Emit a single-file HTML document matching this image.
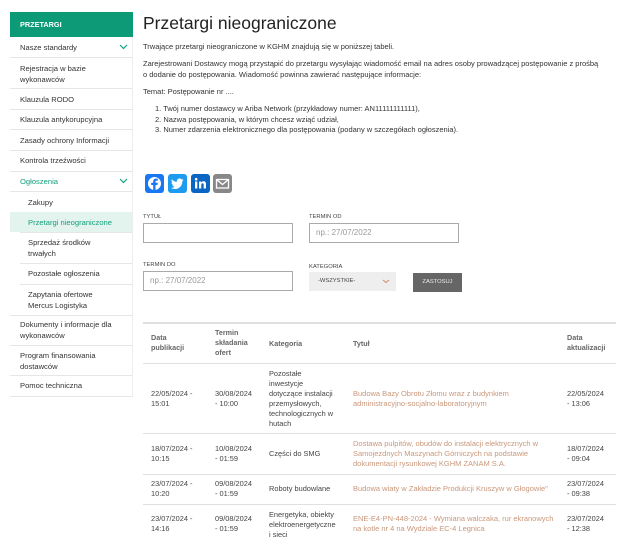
<!DOCTYPE html>
<html><head><meta charset="utf-8"><style>
*{margin:0;padding:0;box-sizing:border-box}
body{width:643px;height:533px;overflow:hidden;background:#fff;font-family:"Liberation Sans",sans-serif;color:#333;position:relative}
.a{position:absolute}
.sb{font-size:7.6px;color:#333;line-height:11px}
.line{position:absolute;left:10px;width:122px;height:1px;background:#e6e6e6}
.p{font-size:7.5px;line-height:10.5px;color:#333}
.lbl{font-size:5.8px;color:#444}
.inp{position:absolute;border:1px solid #aaa;height:20px;background:#fff;font-size:8px;color:#999;padding:4px 6px}
.th{font-size:7.2px;font-weight:bold;color:#666;line-height:10px}
.td{font-size:7.4px;color:#444;line-height:10px}
.tl{font-size:7.5px;color:#c9977a;line-height:10px}
.hr{position:absolute;left:143px;width:473px;height:1px;background:#e0e0e0}
</style></head><body>
<div class="a" style="left:10px;top:12px;width:123px;height:25px;background:#0d9b77;color:#fff;font-size:7.3px;font-weight:bold;padding:8px 10px">PRZETARGI</div>
<div class="a" style="left:10px;top:212px;width:122px;height:20px;background:#e3f3ee"></div>
<div class="a" style="left:132px;top:37px;width:1px;height:360px;background:#eee"></div>
<div class="line" style="top:57px"></div><div class="line" style="top:88px"></div><div class="line" style="top:109px"></div><div class="line" style="top:129px"></div><div class="line" style="top:150px"></div><div class="line" style="top:171px"></div><div class="line" style="top:191px"></div><div class="line" style="top:232px;left:20px;width:112px"></div><div class="line" style="top:263px;left:20px;width:112px"></div><div class="line" style="top:284px;left:20px;width:112px"></div><div class="line" style="top:315px"></div><div class="line" style="top:345px"></div><div class="line" style="top:375px"></div><div class="line" style="top:396px"></div>
<div class="a sb" style="left:20px;top:42px">Nasze standardy</div>
<svg class="a" style="left:119px;top:44px" width="9" height="6"><path d="M1 1l3.5 3.5L8 1" stroke="#13a07c" fill="none" stroke-width="1.2"/></svg>
<div class="a sb" style="left:20px;top:63px">Rejestracja w bazie<br>wykonawców</div>
<div class="a sb" style="left:20px;top:94px">Klauzula RODO</div>
<div class="a sb" style="left:20px;top:114px">Klauzula antykorupcyjna</div>
<div class="a sb" style="left:20px;top:135px">Zasady ochrony Informacji</div>
<div class="a sb" style="left:20px;top:155px">Kontrola trzeźwości</div>
<div class="a sb" style="left:20px;top:176px;color:#13a07c">Ogłoszenia</div>
<svg class="a" style="left:119px;top:178px" width="9" height="6"><path d="M1 1l3.5 3.5L8 1" stroke="#13a07c" fill="none" stroke-width="1.2"/></svg>
<div class="a sb" style="left:28px;top:197px">Zakupy</div>
<div class="a sb" style="left:28px;top:217px;color:#13a07c">Przetargi nieograniczone</div>
<div class="a sb" style="left:28px;top:237px">Sprzedaż środków<br>trwałych</div>
<div class="a sb" style="left:28px;top:268px">Pozostałe ogłoszenia</div>
<div class="a sb" style="left:28px;top:289px">Zapytania ofertowe<br>Mercus Logistyka</div>
<div class="a sb" style="left:20px;top:319px">Dokumenty i informacje dla<br>wykonawców</div>
<div class="a sb" style="left:20px;top:350px">Program finansowania<br>dostawców</div>
<div class="a sb" style="left:20px;top:380px">Pomoc techniczna</div>

<div class="a" style="left:143px;top:13px;font-size:17.5px;color:#222">Przetargi nieograniczone</div>
<div class="a p" style="left:143px;top:42px">Trwające przetargi nieograniczone w KGHM znajdują się w poniższej tabeli.</div>
<div class="a p" style="left:143px;top:59px;width:480px">Zarejestrowani Dostawcy mogą przystąpić do przetargu wysyłając wiadomość email na adres osoby prowadzącej postępowanie z prośbą<br>o dodanie do postępowania. Wiadomość powinna zawierać następujące informacje:</div>
<div class="a p" style="left:143px;top:87px">Temat: Postępowanie nr ....</div>
<div class="a p" style="left:155px;top:104px">1. Twój numer dostawcy w Ariba Network (przykładowy numer: AN11111111111),<br>2. Nazwa postępowania, w którym chcesz wziąć udział,<br>3. Numer zdarzenia elektronicznego dla postępowania (podany w szczegółach ogłoszenia).</div>

<div class="a" style="left:145px;top:174px;width:19px;height:19px;background:#1877f2;border-radius:3px"><svg width="19" height="19"><circle cx="9.5" cy="9.5" r="6.5" fill="#fff"/><path d="M10.5 17V11h2l.3-2.2h-2.3V7.6c0-.6.2-1 1-1h1.3V4.7c-.3 0-1-.1-1.8-.1-1.8 0-2.8 1-2.8 2.9v1.3H6.2V11h2v6z" fill="#1877f2"/></svg></div>
<div class="a" style="left:168px;top:174px;width:19px;height:19px;background:#1d9bf0;border-radius:3px"><svg width="19" height="19"><path d="M15.5 5.8c-.5.2-1 .4-1.5.4.5-.3 1-.8 1.2-1.4-.5.3-1.1.5-1.7.6a2.6 2.6 0 0 0-4.5 2.4C6.800 7.700 5 6.700 3.800 5.200c-.7 1.200-.3 2.700.8 3.500-.4 0-.8-.1-1.200-.3 0 1.300.9 2.400 2.100 2.600-.4.1-.8.1-1.200 0 .3 1.100 1.300 1.800 2.400 1.800A5.300 5.300 0 0 1 3 13.900c1.200.7 2.500 1.100 4 1.100 4.800 0 7.500-4.100 7.300-7.800.5-.4 1-.8 1.200-1.400z" fill="#fff"/></svg></div>
<div class="a" style="left:191px;top:174px;width:19px;height:19px;background:#0a66c2;border-radius:3px"><svg width="19" height="19"><rect x="4" y="7.5" width="2.3" height="7" fill="#fff"/><circle cx="5.15" cy="5.2" r="1.3" fill="#fff"/><path d="M8 7.5h2.2v1c.4-.7 1.200-1.200 2.300-1.200 2 0 2.500 1.300 2.500 3v4.200h-2.300v-3.700c0-.9-.2-1.600-1.100-1.600-.9 0-1.300.7-1.300 1.600v3.700H8z" fill="#fff"/></svg></div>
<div class="a" style="left:213px;top:174px;width:19px;height:19px;background:#888;border-radius:3px"><svg width="19" height="19"><rect x="3.5" y="5.5" width="12" height="8.5" fill="none" stroke="#fff" stroke-width="1.3"/><path d="M3.5 5.5l6 5 6-5" fill="none" stroke="#fff" stroke-width="1.3"/></svg></div>

<div class="a lbl" style="left:143px;top:214px">TYTUŁ</div>
<div class="inp" style="left:143px;top:223px;width:150px"></div>
<div class="a lbl" style="left:309px;top:214px">TERMIN OD</div>
<div class="inp" style="left:309px;top:223px;width:150px">np.: 27/07/2022</div>
<div class="a lbl" style="left:143px;top:262px">TERMIN DO</div>
<div class="inp" style="left:143px;top:271px;width:150px">np.: 27/07/2022</div>
<div class="a lbl" style="left:309px;top:264px">KATEGORIA</div>
<div class="a" style="left:309px;top:272px;width:87px;height:19px;background:#eee;font-size:5.8px;color:#444;padding:6px 9px">-WSZYSTKIE-</div>
<svg class="a" style="left:382px;top:279px" width="8" height="5"><path d="M1 1l3 2.5L7 1" stroke="#d9846a" fill="none" stroke-width="1"/></svg>
<div class="a" style="left:413px;top:273px;width:49px;height:19px;background:#666;color:#eee;font-size:5.8px;text-align:center;padding-top:6px">ZASTOSUJ</div>

<div class="hr" style="top:322px;height:2px"></div>
<div class="hr" style="top:363px"></div><div class="hr" style="top:433px"></div><div class="hr" style="top:474px"></div><div class="hr" style="top:504px"></div>
<div class="a th" style="left:151px;top:333px">Data<br>publikacji</div>
<div class="a th" style="left:215px;top:328px">Termin<br>składania<br>ofert</div>
<div class="a th" style="left:269px;top:339px">Kategoria</div>
<div class="a th" style="left:353px;top:339px">Tytuł</div>
<div class="a th" style="left:567px;top:333px">Data<br>aktualizacji</div>

<div class="a td" style="left:151px;top:389px">22/05/2024 -<br>15:01</div>
<div class="a td" style="left:215px;top:389px">30/08/2024<br>- 10:00</div>
<div class="a td" style="left:269px;top:369px">Pozostałe<br>inwestycje<br>dotyczące instalacji<br>przemysłowych,<br>technologicznych w<br>hutach</div>
<div class="a tl" style="left:353px;top:389px">Budowa Bazy Obrotu Złomu wraz z budynkiem<br>administracyjno-socjalno-laboratoryjnym</div>
<div class="a td" style="left:567px;top:389px">22/05/2024<br>- 13:06</div>

<div class="a td" style="left:151px;top:444px">18/07/2024 -<br>10:15</div>
<div class="a td" style="left:215px;top:444px">10/08/2024<br>- 01:59</div>
<div class="a td" style="left:269px;top:449px">Części do SMG</div>
<div class="a tl" style="left:353px;top:439px">Dostawa pulpitów, obudów do instalacji elektrycznych w<br>Samojezdnych Maszynach Górniczych na podstawie<br>dokumentacji rysunkowej KGHM ZANAM S.A.</div>
<div class="a td" style="left:567px;top:444px">18/07/2024<br>- 09:04</div>

<div class="a td" style="left:151px;top:479px">23/07/2024 -<br>10:20</div>
<div class="a td" style="left:215px;top:479px">09/08/2024<br>- 01:59</div>
<div class="a td" style="left:269px;top:484px">Roboty budowlane</div>
<div class="a tl" style="left:353px;top:484px">Budowa wiaty w Zakładzie Produkcji Kruszyw w Głogowie"</div>
<div class="a td" style="left:567px;top:479px">23/07/2024<br>- 09:38</div>

<div class="a td" style="left:151px;top:514px">23/07/2024 -<br>14:16</div>
<div class="a td" style="left:215px;top:514px">09/08/2024<br>- 01:59</div>
<div class="a td" style="left:269px;top:510px">Energetyka, obiekty<br>elektroenergetyczne<br>i sieci</div>
<div class="a tl" style="left:353px;top:514px">ENE-E4-PN-448-2024 - Wymiana walczaka, rur ekranowych<br>na kotle nr 4 na Wydziale EC-4 Legnica</div>
<div class="a td" style="left:567px;top:514px">23/07/2024<br>- 12:38</div>
</body></html>
